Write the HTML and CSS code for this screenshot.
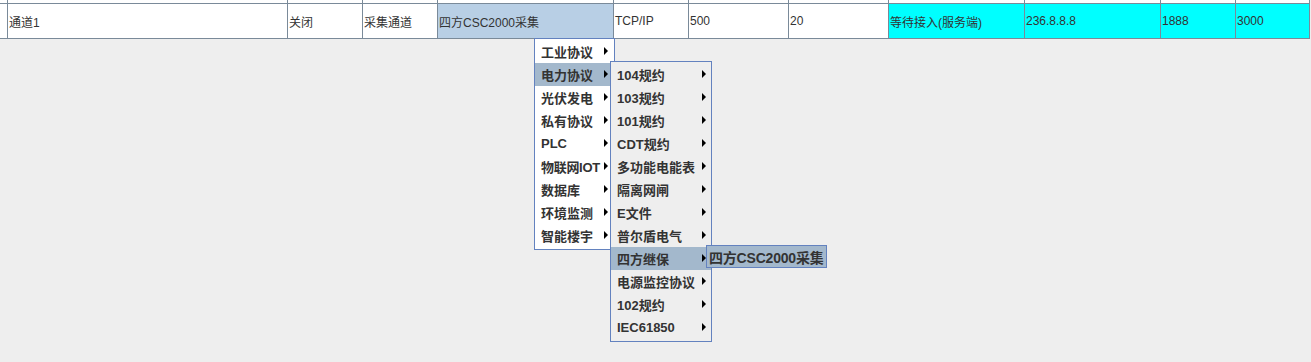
FILE: index.html
```html
<!DOCTYPE html>
<html>
<head>
  <meta charset="UTF-8">
  <title>通道配置</title>
  <link rel="stylesheet" href="styles.css">
</head>
<body>
  <div class="grid">
    <div class="cell head"></div><div class="cell head"></div><div class="cell head"></div><div class="cell head"></div>
    <div class="cell head"></div><div class="cell head"></div><div class="cell head"></div><div class="cell head"></div>
    <div class="cell head cyan"></div><div class="cell head cyan"></div><div class="cell head cyan"></div><div class="cell head cyan"></div>

    <div class="cell"></div>
    <div class="cell">通道1</div>
    <div class="cell">关闭</div>
    <div class="cell">采集通道</div>
    <div class="cell selected">四方CSC2000采集</div>
    <div class="cell">TCP/IP</div>
    <div class="cell">500</div>
    <div class="cell">20</div>
    <div class="cell cyan">等待接入(服务端)</div>
    <div class="cell cyan">236.8.8.8</div>
    <div class="cell cyan">1888</div>
    <div class="cell cyan">3000</div>
  </div>

  <!-- 右键弹出菜单 -->
  <div class="popup menu1">
    <div class="item"><span>工业协议</span><i class="arrow"></i></div>
    <div class="item active"><span>电力协议</span><i class="arrow"></i></div>
    <div class="item"><span>光伏发电</span><i class="arrow"></i></div>
    <div class="item"><span>私有协议</span><i class="arrow"></i></div>
    <div class="item"><span>PLC</span><i class="arrow"></i></div>
    <div class="item"><span class="tight">物联网IOT</span><i class="arrow"></i></div>
    <div class="item"><span>数据库</span><i class="arrow"></i></div>
    <div class="item"><span>环境监测</span><i class="arrow"></i></div>
    <div class="item"><span>智能楼宇</span><i class="arrow"></i></div>
  </div>

  <div class="popup menu2">
    <div class="item"><span>104规约</span><i class="arrow"></i></div>
    <div class="item"><span>103规约</span><i class="arrow"></i></div>
    <div class="item"><span>101规约</span><i class="arrow"></i></div>
    <div class="item"><span>CDT规约</span><i class="arrow"></i></div>
    <div class="item"><span>多功能电能表</span><i class="arrow"></i></div>
    <div class="item"><span>隔离网闸</span><i class="arrow"></i></div>
    <div class="item"><span>E文件</span><i class="arrow"></i></div>
    <div class="item"><span>普尔盾电气</span><i class="arrow"></i></div>
    <div class="item active"><span>四方继保</span><i class="arrow"></i></div>
    <div class="item"><span>电源监控协议</span><i class="arrow"></i></div>
    <div class="item"><span>102规约</span><i class="arrow"></i></div>
    <div class="item"><span>IEC61850</span><i class="arrow"></i></div>
  </div>

  <div class="popup menu3">
    <div class="item active"><span>四方CSC2000采集</span></div>
  </div>
</body>
</html>
```

FILE: styles.css
```css
body {
  margin: 0;
  background-color: #eeeeee;
  font-family: "Liberation Sans", "Noto Sans CJK SC", sans-serif;
  font-size: 12px;
  color: #333333;
}
.grid {
  display: grid;
  grid-template-columns: 7px 279px 74px 74px 175px 74px 99px 99px 135px 135px 74px 73px;
  grid-template-rows: 3px 34px;
  gap: 1px;
  padding: 0 1px 1px 0;
  width: fit-content;
  background-color: #7a8a99;
}
.cell {
  background-color: #ffffff;
  padding-left: 1px;
  display: flex;
  align-items: center;
  white-space: nowrap;
  overflow: hidden;
}
.cell.selected {
  background-color: #b8cfe5;
}
.cell.cyan {
  background-color: #00ffff;
}
.cell.head {
  background-color: #ffffff;
}
.popup {
  position: absolute;
  border: 1px solid #6382bf;
  padding: 1px 0 2px 0;
  display: flex;
  flex-direction: column;
  font-size: 13px;
  font-weight: bold;
  font-family: "Liberation Sans", "Noto Sans CJK SC", sans-serif;
}
.menu1 {
  left: 534px;
  top: 38px;
  width: 79px;
  background-color: #ffffff;
}
.menu2 {
  left: 610px;
  top: 61px;
  width: 100px;
  background-color: #eeeeee;
}
.menu3 {
  left: 706px;
  top: 245px;
  width: 119px;
  padding: 0;
  background-color: #eeeeee;
}
.item {
  height: 23px;
  box-sizing: border-box;
  display: flex;
  align-items: center;
  padding: 0 6px 1px 6px;
  white-space: nowrap;
}
.item span {
  flex: 1;
  min-width: 0;
}
.item .tight {
  letter-spacing: -0.3px;
}
.menu2 .item {
  padding: 0 5px 1px 6px;
}
.menu3 .item {
  height: 21px;
  padding: 0 0 0 2px;
  font-size: 14px;
  letter-spacing: -0.2px;
}
.item.active {
  background-color: #a3b8cc;
}
.arrow {
  flex-shrink: 0;
  width: 0;
  height: 0;
  border-left: 4px solid #000000;
  border-top: 4px solid transparent;
  border-bottom: 4px solid transparent;
}
```
